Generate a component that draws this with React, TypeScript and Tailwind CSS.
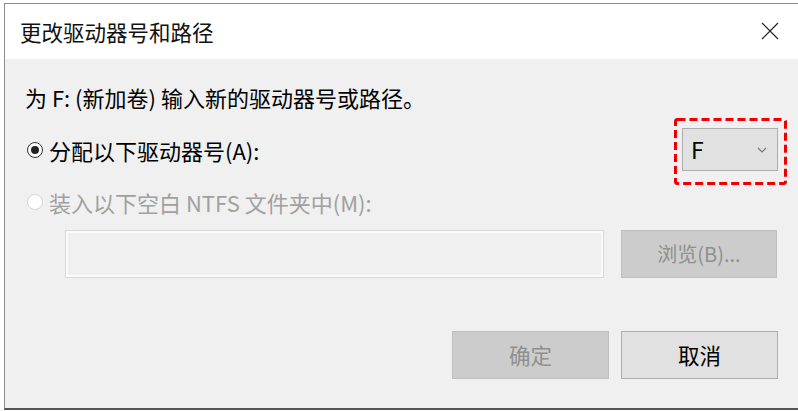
import React from "react";

export default function App() {
  const font = { fontFamily: '"Noto Sans CJK SC", "Noto Sans", sans-serif' };
  return (
    <div className="w-[798px] h-[411px] bg-white pt-[3px] pl-[4px] overflow-hidden" style={font}>
      <div className="h-[407px] flex flex-col border-t border-[#8c8c8c] border-l border-[#6b6b6b] border-b-2 border-b-[#555]">
        <div className="h-[55px] shrink-0 bg-white flex items-center justify-between pl-[15px] pr-[19px]">
          <span className="text-[21.5px] text-[#111] leading-none">更改驱动器号和路径</span>
          <svg width="18" height="18" viewBox="0 0 18 18" className="mt-[-2px]">
            <path d="M1 1 L17 17 M17 1 L1 17" stroke="#222" strokeWidth="1.2" fill="none" />
          </svg>
        </div>
        <div className="flex-1 bg-[#f0f0f0] pl-[20px] pr-[20px] flex flex-col text-black">
          <div className="mt-[26px] h-[24px] leading-[24px] text-[22px]">为 F: (新加卷) 输入新的驱动器号或路径。</div>
          <div className="mt-[19px] h-[43px] flex items-center justify-between">
            <div className="flex items-center">
              <span className="ml-[2px] w-[16px] h-[16px] rounded-full border border-[#333] bg-white flex items-center justify-center">
                <span className="w-[8px] h-[8px] rounded-full bg-[#222]" />
              </span>
              <span className="ml-[6px] text-[22px] leading-[24px]">分配以下驱动器号(A):</span>
            </div>
            <div className="relative w-[96px] h-[43px] bg-[#e1e1e1] border border-[#adadad] flex items-center justify-between pl-[8px] pr-[10px]">
              <span className="text-[23px] leading-none">F</span>
              <svg width="10" height="6" viewBox="0 0 10 6">
                <path d="M1 1 L5 5 L9 1" stroke="#777" strokeWidth="1.2" fill="none" />
              </svg>
              <svg className="absolute left-[-9px] top-[-11px]" width="113" height="67" viewBox="0 0 113 67">
                <rect x="1.5" y="1.5" width="110" height="64" rx="2" fill="none" stroke="#ee0000" strokeWidth="3" strokeDasharray="8 4" />
              </svg>
            </div>
          </div>
          <div className="mt-[19px] h-[24px] flex items-center text-[#a0a0a0]">
            <span className="ml-[2px] w-[16px] h-[16px] rounded-full border border-[#d5d5d5] bg-white" />
            <span className="ml-[6px] text-[22px] leading-[24px]">装入以下空白 NTFS 文件夹中(M):</span>
          </div>
          <div className="mt-[16px] h-[48px] flex">
            <div className="ml-[40px] w-[539px] h-[48px] border border-[#d9d9d9] shadow-[inset_0_0_0_2px_#fbfbfb] bg-[#f0f0f0]" />
            <div className="ml-[17px] w-[156px] h-[48px] bg-[#cccccc] border border-[#bfbfbf] flex items-center justify-center text-[20px] text-[#8f8f8f]">浏览(B)...</div>
          </div>
          <div className="mt-[53px] h-[48px] flex justify-end">
            <div className="w-[157px] h-[48px] bg-[#cccccc] border border-[#bfbfbf] flex items-center justify-center text-[21.5px] text-[#8f8f8f]">确定</div>
            <div className="ml-[12px] w-[157px] h-[48px] bg-[#e1e1e1] border border-[#adadad] flex items-center justify-center text-[21.5px] text-black">取消</div>
          </div>
        </div>
      </div>
    </div>
  );
}
